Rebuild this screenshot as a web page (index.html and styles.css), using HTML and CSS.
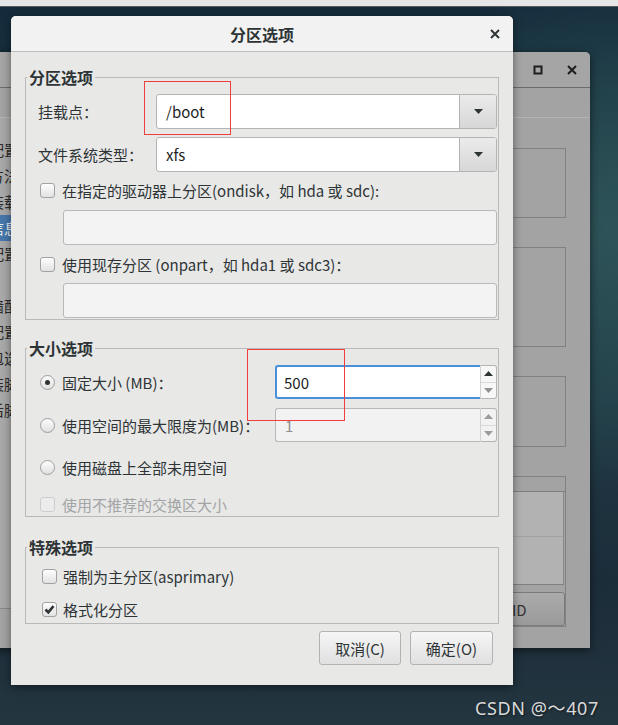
FILE: index.html
```html
<!DOCTYPE html>
<html lang="zh-CN">
<head>
<meta charset="utf-8">
<title>分区选项</title>
<link rel="stylesheet" href="styles.css">
</head>
<body>
<div class="topbar"></div>

<div class="bgwin">
  <div class="bg-title">
    <span class="wbtn"><svg width="10" height="10" viewBox="0 0 10 10"><rect x="1.5" y="1.5" width="7" height="7" fill="none" stroke="#1e1e1e" stroke-width="2"/></svg></span>
    <span class="wbtn"><svg width="10" height="10" viewBox="0 0 10 10"><path d="M1 1L9 9M9 1L1 9" stroke="#1e1e1e" stroke-width="2"/></svg></span>
  </div>
  <div class="bg-menu"></div>
  <div class="bg-main">
    <ul class="bg-side">
      <li>基本配置</li>
      <li>安装方法</li>
      <li>引导装载程序选项</li>
      <li class="sel">分区信息</li>
      <li>网络配置</li>
      <li>验证</li>
      <li>防火墙配置</li>
      <li>显示配置</li>
      <li>软件包选择</li>
      <li>预安装脚本</li>
      <li>安装后脚本</li>
    </ul>
    <div class="bg-content">
      <div class="bg-box b1"></div>
      <div class="bg-box b2"></div>
      <div class="bg-box b3"></div>
      <div class="bg-box b4">
        <div class="tv-head"></div>
        <div class="tv-list"><div class="tv-row"></div></div>
        <div class="tv-foot"><span class="bg-btn">RAID</span></div>
      </div>
    </div>
  </div>
</div>

<div class="dialog">
  <div class="dlg-title">
    <h1>分区选项</h1>
    <span class="dlg-close"><svg width="10" height="10" viewBox="0 0 10 10"><path d="M1 1L9 9M9 1L1 9" stroke="#2e3436" stroke-width="2"/></svg></span>
  </div>
  <div class="dlg-body">
    <fieldset class="frame f1">
      <legend>分区选项</legend>
      <div class="frame-body">
        <div class="field-row">
          <span class="lbl">挂载点：</span>
          <div class="combo"><span class="combo-val">/boot</span><span class="combo-btn"><svg width="9" height="5" viewBox="0 0 9 5"><path d="M0 0H9L4.5 5Z" fill="#2e3436"/></svg></span></div>
        </div>
        <div class="field-row r2">
          <span class="lbl">文件系统类型：</span>
          <div class="combo"><span class="combo-val">xfs</span><span class="combo-btn"><svg width="9" height="5" viewBox="0 0 9 5"><path d="M0 0H9L4.5 5Z" fill="#2e3436"/></svg></span></div>
        </div>
        <div class="check-row c1"><span class="cb"></span><span>在指定的驱动器上分区(ondisk，如 hda 或 sdc):</span></div>
        <div class="entry e1"></div>
        <div class="check-row c2"><span class="cb"></span><span>使用现存分区 (onpart，如 hda1 或 sdc3)：</span></div>
        <div class="entry e2"></div>
      </div>
    </fieldset>

    <fieldset class="frame f2">
      <legend>大小选项</legend>
      <div class="frame-body">
        <div class="size-row">
          <span class="opt"><span class="radio on"></span><span>固定大小 (MB)：</span></span>
          <div class="spin"><span class="spin-val">500</span><span class="spin-btns"><span class="sb"><svg width="9" height="5" viewBox="0 0 9 5"><path d="M0 5H9L4.5 0Z" fill="#2e3436"/></svg></span><span class="sb"><svg width="9" height="5" viewBox="0 0 9 5"><path d="M0 0H9L4.5 5Z" fill="#8f9192"/></svg></span></span></div>
        </div>
        <div class="size-row s2">
          <span class="opt"><span class="radio"></span><span>使用空间的最大限度为(MB)：</span></span>
          <div class="spin disabled"><span class="spin-val">1</span><span class="spin-btns"><span class="sb"><svg width="9" height="5" viewBox="0 0 9 5"><path d="M0 5H9L4.5 0Z" fill="#9a9c9d"/></svg></span><span class="sb"><svg width="9" height="5" viewBox="0 0 9 5"><path d="M0 0H9L4.5 5Z" fill="#9a9c9d"/></svg></span></span></div>
        </div>
        <div class="check-row s3"><span class="radio"></span><span>使用磁盘上全部未用空间</span></div>
        <div class="check-row s4 dis"><span class="cb"></span><span>使用不推荐的交换区大小</span></div>
      </div>
    </fieldset>

    <fieldset class="frame f3">
      <legend>特殊选项</legend>
      <div class="frame-body">
        <div class="check-row t1"><span class="cb"></span><span>强制为主分区(asprimary)</span></div>
        <div class="check-row t2"><span class="cb checked"><svg width="13" height="13" viewBox="0 0 13 13"><path d="M2.5 6.5L5.3 9.3L10.5 3.2" fill="none" stroke="#2e3436" stroke-width="2.6"/></svg></span><span>格式化分区</span></div>
      </div>
    </fieldset>

    <div class="actions">
      <button class="btn b-cancel">取消(C)</button>
      <button class="btn b-ok">确定(O)</button>
    </div>
  </div>
</div>

<div class="mark m1"></div>
<div class="mark m2"></div>
<div class="watermark">CSDN @～407</div>
</body>
</html>
```
FILE: styles.css
```css
* { box-sizing: border-box; }
html, body { margin: 0; }
body {
  width: 618px;
  height: 725px;
  overflow: hidden;
  position: relative;
  background:
    radial-gradient(ellipse 260px 260px at 610px 230px, rgba(47, 86, 90, 0.9) 0%, rgba(47, 86, 90, 0) 100%),
    linear-gradient(180deg, #142a3b 0%, #1e3b46 25%, #203a45 55%, #1c2d3a 80%, #23353f 100%);
  font-family: "Noto Sans CJK SC", "Noto Sans", sans-serif;
  font-size: 15px;
  color: #2e3436;
}

.topbar {
  height: 7px;
  background: #e6e6e6;
  border-bottom: 1px solid #55595c;
}

/* background window */
.bgwin {
  position: absolute;
  left: -60px;
  top: 52px;
  width: 650px;
  height: 596px;
  background: #a3a3a3;
  border-radius: 0 5px 0 0;
  box-shadow: 0 2px 10px rgba(0, 0, 0, 0.55);
  display: flex;
  flex-direction: column;
  overflow: hidden;
}
.bg-title {
  height: 36px;
  flex: none;
  background: #a5a5a5;
  border-bottom: 1px solid #6c6c6c;
  display: flex;
  justify-content: flex-end;
  align-items: center;
  gap: 14px;
  padding-right: 8px;
}
.wbtn {
  width: 20px;
  height: 20px;
  display: flex;
  align-items: center;
  justify-content: center;
}
.bg-menu {
  height: 30px;
  flex: none;
  border-bottom: 1px solid #b3b3b3;
}
.bg-main {
  flex: 1;
  display: flex;
}
.bg-side {
  list-style: none;
  margin: 0 0 39px;
  padding: 19px 0 0 19px;
  width: 220px;
  flex: none;
  background: #a8a8a8;
  border-bottom: 1px solid #8a8a8a;
  color: #2a2a2a;
}
.bg-side li {
  height: 26px;
  line-height: 26px;
  white-space: nowrap;
  margin-left: -19px;
  padding-left: 19px;
}
.bg-side li.sel {
  background: #4776aa;
  color: #e4e8ee;
}
.bg-content {
  flex: 1;
  padding: 30px 24px 0 12px;
  display: flex;
  flex-direction: column;
}
.bg-box {
  border: 1px solid #818181;
}
.b1 { height: 70px; }
.b2 { height: 100px; margin-top: 29px; }
.b3 { height: 71px; margin-top: 29px; }
.b4 {
  height: 151px;
  margin-top: 29px;
  display: flex;
  flex-direction: column;
}
.tv-head {
  height: 15px;
  border-bottom: 1px solid #7f7f7f;
}
.tv-list {
  height: 93px;
  background: #b2b2b2;
  border-right: 1px solid #8a8a8a;
  border-bottom: 1px solid #7f7f7f;
  margin-right: 1px;
}
.tv-row {
  height: 45px;
  border-bottom: 1px solid #a2a2a2;
}
.tv-foot {
  flex: 1;
  display: flex;
  justify-content: flex-end;
  padding: 7px 0 0;
}
.bg-btn {
  width: 110px;
  height: 34px;
  border: 1px solid #7a7a7a;
  border-radius: 3px;
  background: linear-gradient(#ababab, #9a9a9a);
  display: flex;
  align-items: center;
  justify-content: center;
  color: #333;
}

/* dialog */
.dialog {
  position: absolute;
  left: 11px;
  top: 16px;
  width: 502px;
  height: 669px;
  background: #e8e8e7;
  border-radius: 5px 5px 0 0;
  box-shadow: 0 2px 8px rgba(0, 0, 0, 0.45);
  display: flex;
  flex-direction: column;
}
.dlg-title {
  height: 36px;
  flex: none;
  background: #f2f2f2;
  border-bottom: 1px solid #bebebe;
  border-radius: 5px 5px 0 0;
  display: grid;
  grid-template-columns: 1fr auto 1fr;
  align-items: center;
}
.dlg-title h1 {
  grid-column: 2;
  margin: 0;
  font-size: 16px;
  font-weight: bold;
  line-height: 20px;
}
.dlg-close {
  grid-column: 3;
  justify-self: end;
  margin-right: 8px;
  width: 20px;
  height: 20px;
  display: flex;
  align-items: center;
  justify-content: center;
}
.dlg-body {
  flex: 1;
  padding: 0 14px 20px;
  display: flex;
  flex-direction: column;
}

.frame {
  margin: 0;
  padding: 0;
  border: 1px solid #b9b9b9;
  min-width: 0;
}
.frame legend {
  font-size: 16px;
  font-weight: bold;
  line-height: 18px;
  padding: 0 2px;
  margin-left: 1px;
}
.frame-body {
  padding: 8px 1px 1px 12px;
}
.f1 { margin-top: 16px; }
.f2 { margin-top: 19px; }
.f3 { margin-top: 21px; }
.f3 .frame-body { padding: 10px 1px 3px 12px; }

.field-row {
  display: grid;
  grid-template-columns: 118px 1fr;
  align-items: center;
  height: 35px;
}
.field-row.r2 { margin-top: 8px; }

.combo {
  display: flex;
  height: 35px;
  border: 1px solid #b4b4b4;
  border-radius: 3px;
  background: #fff;
  overflow: hidden;
}
.combo-val {
  flex: 1;
  padding-left: 9px;
  display: flex;
  align-items: center;
  color: #1e1e1e;
}
.combo-btn {
  width: 37px;
  border-left: 1px solid #b4b4b4;
  background: linear-gradient(#ebebeb, #d7d7d7);
  display: flex;
  align-items: center;
  justify-content: center;
}

.check-row {
  display: flex;
  align-items: center;
  gap: 7px;
  height: 21px;
  margin-left: 2px;
  white-space: nowrap;
}
.c1 { margin-top: 8px; }
.c2 { margin-top: 9px; }
.entry {
  height: 35px;
  margin-left: 25px;
  border: 1px solid #b8b8b8;
  border-radius: 3px;
  background: #f3f3f3;
}
.e1 { margin-top: 9px; }
.e2 { margin-top: 8px; }

.cb {
  width: 15px;
  height: 15px;
  flex: none;
  border: 1px solid #a2a2a2;
  border-radius: 3px;
  background: linear-gradient(#fdfdfd, #e2e2e2);
  display: flex;
  align-items: center;
  justify-content: center;
}
.radio {
  width: 15px;
  height: 15px;
  flex: none;
  border: 1px solid #9e9e9e;
  border-radius: 50%;
  background: linear-gradient(#fdfdfd, #e0e0e0);
  display: flex;
  align-items: center;
  justify-content: center;
}
.radio.on::after {
  content: "";
  width: 5px;
  height: 5px;
  border-radius: 50%;
  background: #2e3436;
}
.dis { color: #a2a4a5; }
.dis .cb {
  border-color: #cdcdcd;
  background: #ececec;
}

.size-row {
  display: grid;
  grid-template-columns: 237px 1fr;
  align-items: center;
  height: 34px;
}
.size-row.s2 { margin-top: 9px; }
.opt {
  display: flex;
  align-items: center;
  gap: 7px;
  margin-left: 2px;
  white-space: nowrap;
}
.s3 { margin-top: 15px; }
.s4 { margin-top: 16px; }

.spin {
  display: flex;
  height: 34px;
}
.spin-val {
  flex: 1;
  border: 2px solid #4a90d9;
  border-right: none;
  border-radius: 3px 0 0 3px;
  background: #fff;
  padding-left: 7px;
  display: flex;
  align-items: center;
  color: #1e1e1e;
}
.spin-btns {
  width: 17px;
  display: flex;
  flex-direction: column;
  border: 1px solid #b5b5b5;
  border-left: 1px solid #d2d2d2;
  border-radius: 0 3px 3px 0;
  background: #f7f7f7;
}
.sb {
  flex: 1;
  display: flex;
  align-items: center;
  justify-content: center;
}
.sb + .sb { border-top: 1px solid #d8d8d8; }
.spin.disabled .spin-val {
  border: 1px solid #b8b8b8;
  border-right: none;
  background: #f2f2f2;
  color: #8e8e8e;
  padding-left: 9px;
}
.spin.disabled .spin-btns { background: #f2f2f2; }

.t1 { margin-left: 4px; gap: 6px; }
.t2 { margin-left: 4px; gap: 6px; margin-top: 12px; }

.actions {
  margin-top: 7px;
  display: flex;
  justify-content: flex-end;
  gap: 9px;
  padding-right: 6px;
}
.btn {
  height: 34px;
  padding: 0;
  border: 1px solid #b2b2b2;
  border-radius: 3px;
  background: linear-gradient(#f6f6f6, #e0e0e0);
  font: inherit;
  color: #2e3436;
}
.b-cancel { width: 82px; }
.b-ok { width: 83px; }

/* annotations */
.mark {
  position: absolute;
  border: 1px solid #f03d3d;
}
.m1 { left: 144px; top: 81px; width: 87px; height: 54px; }
.m2 { left: 247px; top: 349px; width: 98px; height: 72px; }

.watermark {
  position: absolute;
  left: 475px;
  top: 694px;
  font-family: "Noto Sans", "Noto Sans CJK SC", sans-serif;
  font-size: 18px;
  letter-spacing: 0.6px;
  color: #dadada;
  text-shadow: 1px 1px 2px rgba(0, 0, 0, 0.5);
  white-space: nowrap;
}
```
